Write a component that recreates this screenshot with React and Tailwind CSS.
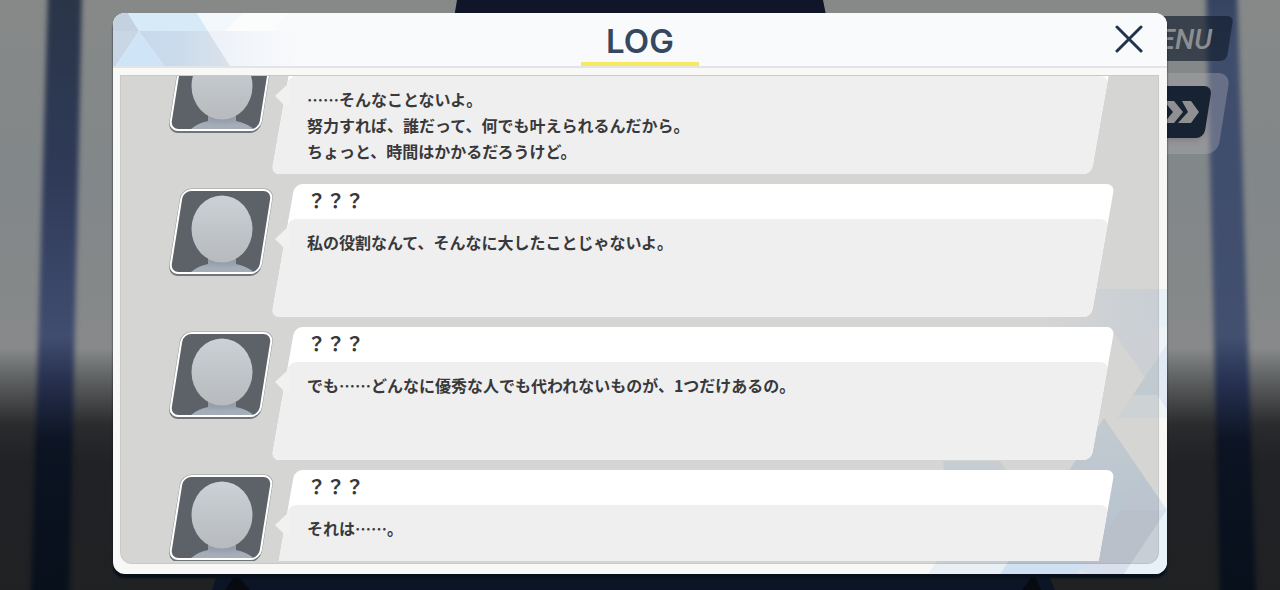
import React, { useId, useLayoutEffect, useRef } from 'react';

const entries = [
    {
        name: '？？？',
        lines: ['……そんなことないよ。', '努力すれば、誰だって、何でも叶えられるんだから。', 'ちょっと、時間はかかるだろうけど。'],
    },
    { name: '？？？', lines: ['私の役割なんて、そんなに大したことじゃないよ。'] },
    { name: '？？？', lines: ['でも……どんなに優秀な人でも代われないものが、1つだけあるの。'] },
    { name: '？？？', lines: ['それは……。'] },
];

const Backdrop = () => (
    <svg className="absolute inset-0 h-full w-full" viewBox="0 0 1280 590" preserveAspectRatio="none" aria-hidden="true">
        <defs>
            <linearGradient id="room" x1="0" y1="0" x2="0" y2="1">
                <stop offset="0" stopColor="#878988" />
                <stop offset="0.3" stopColor="#828789" />
                <stop offset="0.59" stopColor="#87898a" />
                <stop offset="0.64" stopColor="#606364" />
                <stop offset="0.72" stopColor="#2a2b2d" />
                <stop offset="0.78" stopColor="#202225" />
                <stop offset="1" stopColor="#1f2123" />
            </linearGradient>
            <linearGradient id="pillarLeft" x1="0" y1="0" x2="0" y2="1">
                <stop offset="0" stopColor="#2a3548" />
                <stop offset="0.3" stopColor="#2f3a58" />
                <stop offset="0.57" stopColor="#414d70" />
                <stop offset="0.64" stopColor="#27304e" />
                <stop offset="0.74" stopColor="#0c1322" />
                <stop offset="1" stopColor="#07101b" />
            </linearGradient>
            <linearGradient id="pillarRight" x1="0" y1="0" x2="0" y2="1">
                <stop offset="0" stopColor="#34425f" />
                <stop offset="0.1" stopColor="#3f4d6d" />
                <stop offset="0.57" stopColor="#424f6e" />
                <stop offset="0.64" stopColor="#273253" />
                <stop offset="0.74" stopColor="#0c1322" />
                <stop offset="1" stopColor="#07101b" />
            </linearGradient>
            <filter id="soft" x="-20%" y="-5%" width="140%" height="110%" colorInterpolationFilters="sRGB">
                <feGaussianBlur stdDeviation="2.5" />
            </filter>
        </defs>
        <rect width="1280" height="590" fill="url(#room)" />
        <path d="M48 -10H82L69 600H31Z" fill="url(#pillarLeft)" filter="url(#soft)" />
        <path d="M1206 -10H1237L1256 600H1220Z" fill="url(#pillarRight)" filter="url(#soft)" />
        <path d="M457 0H823L829 30H452Z" fill="#10152a" />
        <path d="M222 560H1042L1055 590H212Z" fill="#0c1525" />
        <path d="M236 574L250 590H225ZM1034 574L1041 590H1022Z" fill="#070a10" />
    </svg>
);

const SceneControls = () => (
    <div className="absolute top-4 right-12 flex flex-col items-end">
        <button type="button" className="relative h-[45px] w-32 pr-5 text-right">
            <span className="absolute inset-y-0 right-0.5 left-0 -skew-x-9 rounded-md bg-[#101c2c]/65"></span>
            <span className="relative font-['Roboto',sans-serif] text-[28px] leading-[47px] font-medium text-[#8c8e90] italic">MENU</span>
        </button>
        <div className="relative mt-3 mr-1 h-[81px] w-32 pt-[13px] pr-4">
            <span className="absolute inset-y-0 right-1 left-0 -skew-x-9 rounded-xl bg-[#b4b2b8]/35"></span>
            <button type="button" aria-label="早送り" className="relative flex h-[52px] w-full items-center justify-end pr-3">
                <span className="absolute inset-y-0 right-1 left-0 -skew-x-9 rounded-lg bg-[#172232] shadow-md"></span>
                <svg className="relative h-[22px] w-9" viewBox="0 0 36 22" fill="#8f9091" aria-hidden="true">
                    <path d="M0 0H10L19 11L10 22H0L9 11Z" />
                    <path d="M18 0H27L35 11L27 22H14L24 11Z" />
                </svg>
            </button>
        </div>
    </div>
);

const HeaderFacets = () => (
    <svg className="absolute top-0 left-0 h-[54px] w-[220px]" viewBox="0 0 220 54" preserveAspectRatio="none" aria-hidden="true">
        <defs>
            <linearGradient id="facetMid" x1="0" x2="1">
                <stop offset="0" stopColor="#c6d8ec" />
                <stop offset="0.5" stopColor="#cddcec" />
                <stop offset="1" stopColor="#dbe2ea" />
            </linearGradient>
            <linearGradient id="facetFade" x1="0" x2="1">
                <stop offset="0" stopColor="#ecf1f7" />
                <stop offset="0.5" stopColor="#f3f6fa" />
                <stop offset="1" stopColor="#f9fafc" />
            </linearGradient>
        </defs>
        <path d="M0 0H15L26 18H0Z" fill="#c4d1de" />
        <path d="M15 0H84L95 18H26Z" fill="#d7eaf8" />
        <path d="M0 18H26L2 54H0Z" fill="#c9d6e6" />
        <path d="M26 18L52 54H2Z" fill="#cfe4f6" />
        <path d="M26 18H95L118 54H52Z" fill="url(#facetMid)" />
        <path d="M84 0H130L113 18H95Z" fill="#f2f8fb" />
        <path d="M130 0H174L160 18H113Z" fill="#fbfdfd" />
        <path d="M95 18H190L180 54H118Z" fill="url(#facetFade)" />
    </svg>
);

const CornerFacets = () => (
    <svg className="absolute right-0 bottom-0 h-[300px] w-[260px]" viewBox="907 274 260 300" aria-hidden="true">
        <defs>
            <linearGradient id="haze" x1="0" x2="1">
                <stop offset="0" stopColor="#e9f0f8" stopOpacity="0" />
                <stop offset="1" stopColor="#e8f0f8" />
            </linearGradient>
            <linearGradient id="diamond" x1="0" y1="0" x2="0" y2="1">
                <stop offset="0" stopColor="#e3ecf1" />
                <stop offset="1" stopColor="#cfe1f1" />
            </linearGradient>
        </defs>
        <path d="M1070 289H1167V327H1040Z" fill="url(#haze)" />
        <path d="M1110 327H1167V410L1117 337Z" fill="#eef3f7" />
        <path d="M1167 344L1133 395H1157L1167 410Z" fill="#e1eaf4" />
        <path d="M1133 395H1157L1167 410V418H1117Z" fill="#eff5f7" />
        <path d="M943 461H1000L1075 574H928L948 545Z" fill="#e8f0f6" />
        <path d="M1104 418L1167 510L1124 574H1000Z" fill="url(#diamond)" />
        <path d="M1143 478L1166 510H1120Z" fill="#dbe6f1" />
        <path d="M1120 510H1166L1124 574H1078Z" fill="#d7e0ec" />
        <path d="M1167 510V574H1124Z" fill="#e7f1f8" />
        <path d="M1082 568L1087 574H1077Z" fill="#dfe2ea" />
    </svg>
);

const Avatar = () => {
    const id = useId();
    return (
        <svg className="mt-[2px] h-[94px] w-28 shrink-0" viewBox="0 0 112 94" role="img" aria-label="不明">
            <defs>
                <clipPath id={`${id}clip`}>
                    <rect x="11" y="5" width="90" height="81" rx="9" transform="translate(7.2 0) skewX(-9)" />
                </clipPath>
                <linearGradient id={`${id}face`} x1="0" y1="0" x2="0" y2="1">
                    <stop offset="0" stopColor="#cdd1d5" />
                    <stop offset="0.55" stopColor="#bfc4c8" />
                    <stop offset="1" stopColor="#b8babd" />
                </linearGradient>
                <radialGradient id={`${id}body`} cx="0.5" cy="0.2" r="0.6">
                    <stop offset="0" stopColor="#8a95a4" />
                    <stop offset="1" stopColor="#a4adb8" />
                </radialGradient>
            </defs>
            <rect x="10" y="6" width="92" height="84" rx="10" transform="translate(7.2 0) skewX(-9)" fill="#70757a" />
            <rect x="9.5" y="2.5" width="93" height="85" rx="10" transform="translate(7.2 0) skewX(-9)" fill="#9b9fa1" />
            <rect x="11" y="4" width="90" height="83" rx="9" transform="translate(7.2 0) skewX(-9)" fill="#5c6268" stroke="#ffffff" strokeWidth="2" />
            <g clipPath={`url(#${id}clip)`}>
                <path d="M26 86Q33 80 43 78V70H71V78Q81 80 89 86Z" fill={`url(#${id}body)`} />
                <ellipse cx="57" cy="43" rx="30.5" ry="33.5" fill={`url(#${id}face)`} />
            </g>
        </svg>
    );
};

const LogEntry = ({ name, lines }) => (
    <li className="flex h-[133px] shrink-0 pr-[55px] pl-11">
        <Avatar />
        <article className="relative ml-[6px] flex-1">
            <div className="absolute inset-0 flex -skew-x-10 flex-col overflow-hidden rounded-lg bg-white">
                <div className="mt-[35px] flex-1 rounded-t-lg bg-[#efefef]"></div>
            </div>
            <svg className="absolute top-10 -left-2 h-6 w-4" viewBox="0 0 16 24" fill="#f1f1f1" aria-hidden="true">
                <path d="M0 15L15 1V24H9Z" />
            </svg>
            <h2 className="relative h-[35px] pl-6 text-[19px] leading-[32px] font-bold">{name}</h2>
            <div className="relative pt-[10px] pl-6 text-base leading-[26px] font-bold">
                {lines.map((line) => (
                    <p key={line}>{line}</p>
                ))}
            </div>
        </article>
    </li>
);

const App = () => {
    const listRef = useRef(null);

    useLayoutEffect(() => {
        listRef.current.scrollTop = 35;
    }, []);

    return (
        <div lang="ja" className="relative h-screen overflow-hidden font-['Noto_Sans_CJK_JP',sans-serif] text-[#38393b]">
            <Backdrop />
            <SceneControls />

            <div className="relative flex h-full px-[113px] pt-[13px] pb-4">
                <section
                    role="dialog"
                    aria-labelledby="log-title"
                    className="relative flex min-w-0 flex-1 flex-col rounded-xl bg-[#f8f8f6] shadow-[0_4px_2px_#07101a]"
                >
                    <div className="absolute inset-0 overflow-hidden rounded-xl">
                        <CornerFacets />
                    </div>

                    {/* Title bar */}
                    <header className="relative flex h-[55px] shrink-0 justify-center overflow-hidden rounded-t-xl border-b-2 border-[#e1e5e9] bg-[#f9fafc]">
                        <HeaderFacets />
                        <h1
                            id="log-title"
                            className="relative w-[118px] border-b-4 border-[#f7ea62] pt-1 text-center font-['Inter',sans-serif] text-[33px] leading-[49px] font-semibold text-[#364860]"
                        >
                            LOG
                        </h1>
                        <button type="button" aria-label="閉じる" className="absolute top-2 right-5 flex size-9 items-center justify-center">
                            <svg className="size-7" viewBox="0 0 28 28" fill="none" stroke="#22334d" strokeWidth="3" strokeLinecap="round" aria-hidden="true">
                                <path d="M2 2L26 26M26 2L2 26" />
                            </svg>
                        </button>
                    </header>

                    {/* Conversation */}
                    <div className="relative mt-[7px] mr-2 mb-[10px] ml-[7px] flex min-h-0 flex-1 flex-col rounded-b-xl border border-black/5 bg-[#101010]/15 pb-[2px]">
                        <ul ref={listRef} className="flex min-h-0 flex-1 flex-col gap-[10px] overflow-y-auto [scrollbar-width:none]">
                            {entries.map((entry, i) => (
                                <LogEntry key={i} {...entry} />
                            ))}
                        </ul>
                    </div>
                </section>
            </div>
        </div>
    );
};

export default App;
